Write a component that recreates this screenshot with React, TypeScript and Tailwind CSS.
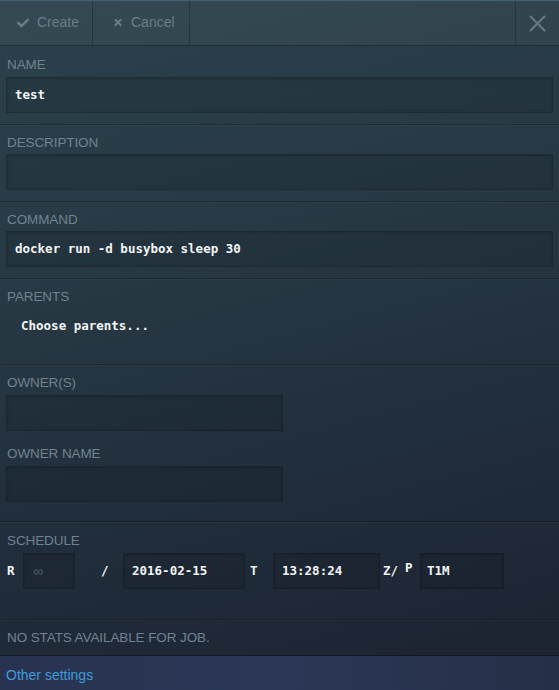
import React from "react";
import { FaCheck, FaTimes } from "react-icons/fa";

const sans = "font-['Helvetica_Neue','Liberation_Sans',Arial,sans-serif]";
const mono = "font-['DejaVu_Sans_Mono','Liberation_Mono',monospace]";

function Label({ children }: { children: React.ReactNode }) {
  return (
    <div className={`${sans} h-[16px] leading-[16px] pl-[1px] text-[13.5px] uppercase text-[#718390] tracking-[-0.1px]`}>
      {children}
    </div>
  );
}

const inputCls =
  "h-[36px] flex items-center bg-[rgba(0,0,0,0.09)] border border-[rgba(0,0,0,0.17)] shadow-[inset_0_1px_3px_rgba(0,0,0,0.18)]";

function Input({ value, className = "" }: { value?: string; className?: string }) {
  return (
    <div className={`${inputCls} px-[8px] ${className}`}>
      {value && (
        <span className={`${mono} text-[12.5px] font-bold text-[#f2f4f5]`}>{value}</span>
      )}
    </div>
  );
}

function Divider() {
  return <div className="h-[2px] shrink-0 border-t border-[rgba(0,0,0,0.22)] border-b border-b-[rgba(255,255,255,0.03)]" />;
}

export default function App() {
  return (
    <div className="w-[559px] h-[690px] flex flex-col overflow-hidden bg-[linear-gradient(165deg,#2b414c_0%,#273944_35%,#212e3c_65%,#1c2231_100%)]">
      {/* toolbar */}
      <div className="h-[46px] shrink-0 flex border-t border-t-[#456273] border-b border-b-[rgba(0,0,0,0.3)] bg-[rgba(255,255,255,0.045)]">
        <div className={`${sans} w-[93px] flex items-center pl-[17px] gap-[8px] pb-[1px] text-[14px] text-[#6a7d89] border-r border-[rgba(0,0,0,0.22)]`}>
          <FaCheck className="w-[12px] h-[12px]" />
          <span>Create</span>
        </div>
        <div className={`${sans} w-[97px] flex items-center pl-[20px] gap-[8px] pb-[1px] text-[14px] text-[#6a7d89] border-r border-[rgba(0,0,0,0.22)]`}>
          <FaTimes className="w-[10px] h-[11px]" />
          <span>Cancel</span>
        </div>
        <div className="flex-1" />
        <div className="w-[44px] flex items-center justify-center border-l border-[rgba(0,0,0,0.22)]">
          <svg width="17" height="17" viewBox="0 0 17 17">
            <path d="M1.5 1.5 L15.5 15.5 M15.5 1.5 L1.5 15.5" stroke="#687984" strokeWidth="2" strokeLinecap="round" />
          </svg>
        </div>
      </div>

      {/* NAME */}
      <div className="h-[78px] shrink-0 px-[6px] pt-[11px] flex flex-col gap-[4px]">
        <Label>Name</Label>
        <Input value="test" />
      </div>
      <Divider />

      {/* DESCRIPTION */}
      <div className="h-[75px] shrink-0 px-[6px] pt-[9px] flex flex-col gap-[3px]">
        <Label>Description</Label>
        <Input />
      </div>
      <Divider />

      {/* COMMAND */}
      <div className="h-[75px] shrink-0 px-[6px] pt-[9px] flex flex-col gap-[3px]">
        <Label>Command</Label>
        <Input value="docker run -d busybox sleep 30" />
      </div>
      <Divider />

      {/* PARENTS */}
      <div className="h-[84px] shrink-0 px-[6px] pt-[9px] flex flex-col gap-[3px]">
        <Label>Parents</Label>
        <div className="h-[36px] flex items-center pl-[15px]">
          <span className={`${mono} text-[12.5px] font-bold text-[#f2f4f5]`}>Choose parents...</span>
        </div>
      </div>
      <Divider />

      {/* OWNERS */}
      <div className="h-[155px] shrink-0 px-[6px] pt-[9px] flex flex-col">
        <Label>Owner(s)</Label>
        <Input className="w-[277px] mt-[4px]" />
        <div className="mt-[15px]">
          <Label>Owner name</Label>
        </div>
        <Input className="w-[277px] mt-[4px]" />
      </div>
      <Divider />

      {/* SCHEDULE */}
      <div className="h-[96px] shrink-0 px-[6px] pt-[10px] flex flex-col gap-[4px]">
        <Label>Schedule</Label>
        <div className={`${mono} flex items-center h-[36px] text-[12.5px] font-bold text-[#f2f4f5]`}>
          <span className="w-[17px] pl-[1px]">R</span>
          <div className={`${inputCls} w-[52px] px-[9px]`}>
            <span className={`${sans} text-[14px] font-normal text-[#4f606b]`}>∞</span>
          </div>
          <span className="w-[48px] pl-[26px]">/</span>
          <div className={`${inputCls} w-[122px] px-[8px] rounded-[3px]`}>2016-02-15</div>
          <span className="w-[28px] pl-[5px]">T</span>
          <div className={`${inputCls} w-[107px] px-[8px]`}>13:28:24</div>
          <span className="w-[22px] pl-[3px]">Z/</span>
          <span className="w-[18px] pl-[3px] -mt-[5px]">P</span>
          <div className={`${inputCls} w-[84px] px-[6px]`}>T1M</div>
        </div>
      </div>
      <Divider />

      {/* NO STATS */}
      <div className="h-[34px] shrink-0 px-[6px] pt-[9px]">
        <Label>No stats available for job.</Label>
      </div>
      <div className="h-[1px] shrink-0 bg-[rgba(0,0,0,0.3)]" />

      {/* footer */}
      <div className="flex-1 flex items-center px-[6px] pt-[4px] bg-[linear-gradient(90deg,#273350_0%,#2b3756_50%,#262f47_100%)]">
        <span className={`${sans} text-[14px] text-[#3f9bd8]`}>Other settings</span>
      </div>
    </div>
  );
}
